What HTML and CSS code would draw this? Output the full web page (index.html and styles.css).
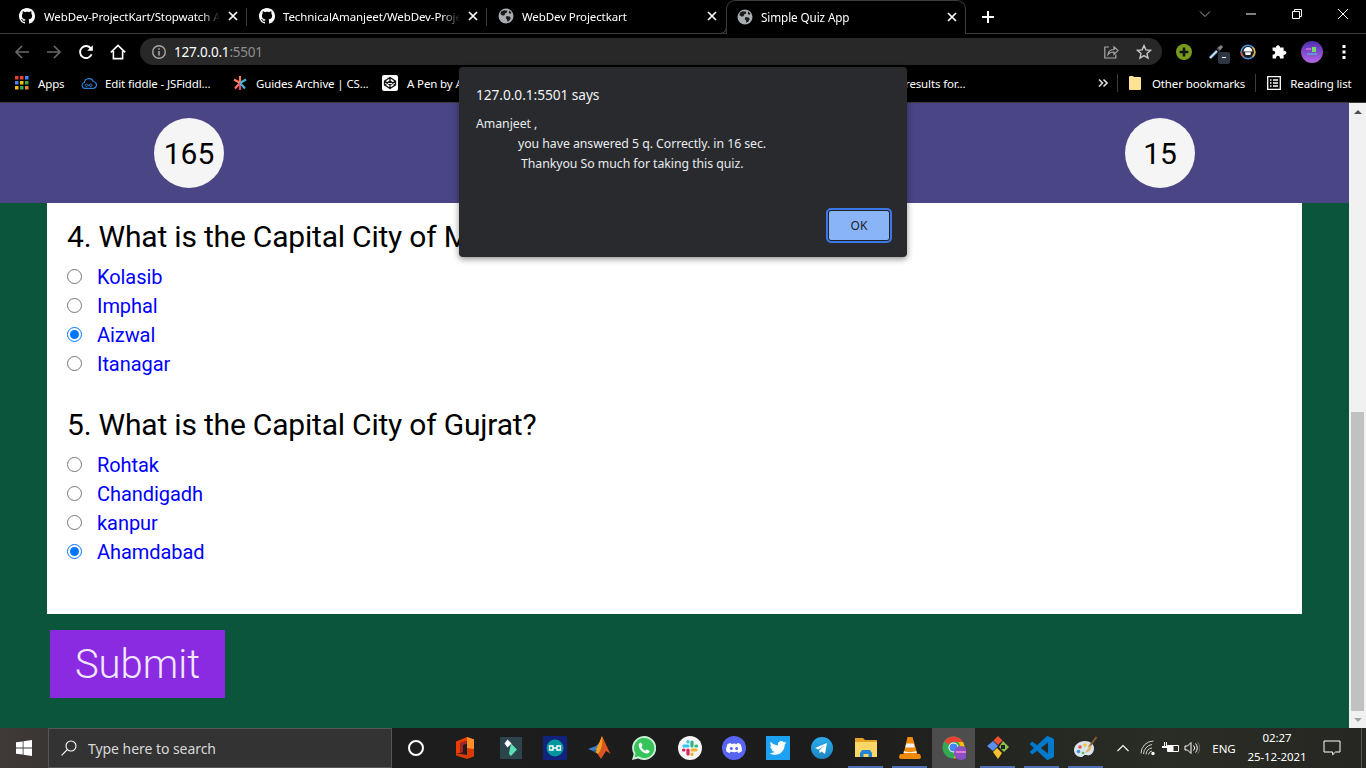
FILE: index.html
```html
<!DOCTYPE html>
<html lang="en">
<head>
<meta charset="utf-8">
<title>Simple Quiz App</title>
<link rel="stylesheet" href="styles.css">
</head>
<body>
<svg class="defs" aria-hidden="true">
  <symbol id="gh" viewBox="0 0 16 16"><path fill="#fff" d="M8 0C3.58 0 0 3.58 0 8c0 3.54 2.29 6.53 5.47 7.59.4.07.55-.17.55-.38 0-.19-.01-.82-.01-1.49-2.01.37-2.53-.49-2.69-.94-.09-.23-.48-.94-.82-1.13-.28-.15-.68-.52-.01-.53.63-.01 1.08.58 1.23.82.72 1.21 1.87.87 2.33.66.07-.52.28-.87.51-1.07-1.78-.2-3.64-.89-3.64-3.95 0-.87.31-1.59.82-2.15-.08-.2-.36-1.02.08-2.12 0 0 .67-.21 2.2.82.64-.18 1.32-.27 2-.27.68 0 1.36.09 2 .27 1.53-1.04 2.2-.82 2.2-.82.44 1.1.16 1.92.08 2.12.51.56.82 1.27.82 2.15 0 3.07-1.87 3.75-3.65 3.95.29.25.54.73.54 1.48 0 1.07-.01 1.93-.01 2.2 0 .21.15.46.55.38A8.013 8.013 0 0016 8c0-4.42-3.58-8-8-8z"/></symbol>
  <symbol id="globe" viewBox="0 0 16 16"><circle cx="8" cy="8" r="7.5" fill="#a9adb2"/><path fill="#1b1b1b" d="M3 3.6 6 2.2l3.4.5-.6 2-1.8.7-.2 1.7-2 .6L2.4 6zM8.6 8l3 .4 1.2 1.6-1.4 2.6-2 1.2-.4-2.4-1.4-1.4zM11 2.6l2.4 2-.6 1.2-2-.6z"/></symbol>
  <symbol id="x" viewBox="0 0 10 10"><path stroke="#fff" stroke-width="1.7" d="M1 1l8 8M9 1l-8 8"/></symbol>
</svg>

<header class="chrome">
  <div class="tabstrip">
    <div class="tab tab-first"><svg class="fav"><use href="#gh"/></svg><span class="tab-title">WebDev-ProjectKart/Stopwatch App</span><svg class="tab-x"><use href="#x"/></svg></div>
    <div class="tab"><svg class="fav"><use href="#gh"/></svg><span class="tab-title">TechnicalAmanjeet/WebDev-Projectkart</span><svg class="tab-x"><use href="#x"/></svg></div>
    <div class="tab tab-last"><svg class="fav"><use href="#globe"/></svg><span class="tab-title">WebDev Projectkart</span><svg class="tab-x"><use href="#x"/></svg></div>
    <div class="tab tab-active"><svg class="fav"><use href="#globe"/></svg><span class="tab-title">Simple Quiz App</span><svg class="tab-x"><use href="#x"/></svg></div>
    <svg class="newtab" viewBox="0 0 12 12"><path stroke="#fff" stroke-width="2" d="M6 0v12M0 6h12"/></svg>
    <div class="winctl">
      <svg class="wc" viewBox="0 0 12 12"><path fill="none" stroke="#aaa" d="M1 3.5l5 5 5-5"/></svg>
      <svg class="wc" viewBox="0 0 12 12"><path stroke="#fff" d="M1 6h10"/></svg>
      <svg class="wc" viewBox="0 0 12 12"><path fill="none" stroke="#fff" d="M1.5 3.5h7v7h-7zM3.5 3.5v-2h7v7h-2"/></svg>
      <svg class="wc" viewBox="0 0 12 12"><path stroke="#fff" d="M1 1l10 10M11 1L1 11"/></svg>
    </div>
  </div>
  <div class="toolbar">
    <svg class="tb dim" viewBox="0 0 16 16"><path fill="none" stroke="#6a6a6a" stroke-width="1.6" d="M15 8H2M8 2L2 8l6 6"/></svg>
    <svg class="tb dim" viewBox="0 0 16 16"><path fill="none" stroke="#6a6a6a" stroke-width="1.6" d="M1 8h13M8 2l6 6-6 6"/></svg>
    <svg class="tb" viewBox="0 0 16 16"><path fill="none" stroke="#fff" stroke-width="1.9" d="M13.6 10.4A6 6 0 1 1 13 4.6"/><path fill="#fff" d="M14.8 1.2v5.6H9.2z"/></svg>
    <svg class="tb" viewBox="0 0 16 16"><path fill="none" stroke="#fff" stroke-width="1.6" d="M.8 8.4L8 1.4l7.2 7M3.4 7v7.6h9.2V7"/></svg>
    <div class="omnibox">
      <svg class="info" viewBox="0 0 16 16"><circle cx="8" cy="8" r="6.3" fill="none" stroke="#a8a8a8" stroke-width="1.4"/><path stroke="#a8a8a8" stroke-width="1.6" d="M8 7v4.6M8 4.2v1.6"/></svg>
      <span class="url">127.0.0.1<span class="url-port">:5501</span></span>
      <svg class="omni-share" viewBox="0 0 16 16"><path fill="none" stroke="#a8a8a8" stroke-width="1.2" d="M6 3H1.8v11h11v-3.5M5 10.5c.4-3.4 3-5 6-5V2.8l4 3.8-4 3.8V8c-2.6 0-4.6.6-6 2.5z"/></svg>
      <svg class="omni-star" viewBox="0 0 16 16"><path fill="none" stroke="#c8c8c8" stroke-width="1.4" d="M8 1.6l1.9 4.3 4.6.4-3.5 3.1 1 4.6L8 11.6 4 14l1-4.6-3.5-3.1 4.6-.4z"/></svg>
    </div>
    <div class="exts">
      <svg class="ext" viewBox="0 0 16 16"><circle cx="8" cy="8" r="8" fill="#7a9a1e"/><path stroke="#10160a" stroke-width="2.6" d="M8 3.6v8.8M3.6 8h8.8"/></svg>
      <span class="ext-wrap">
        <svg class="ext" viewBox="0 0 16 16"><path stroke="#5b9bd5" stroke-width="3" d="M2 14l7-7"/><path stroke="#e8e8e8" stroke-width="1.2" d="M2 14l7-7"/><path stroke="#444" stroke-width="3.4" d="M9.5 3.5l3 3"/><path stroke="#888" stroke-width="3" d="M11 5l3-3"/></svg>
        <span class="ext-badge"><i></i></span>
      </span>
      <svg class="ext" viewBox="0 0 16 16"><circle cx="8" cy="8" r="6.8" fill="#1b1b1b" stroke="#4a90d9" stroke-width="1.6"/><path fill="none" stroke="#e8b23a" stroke-width="1.6" d="M12.8 3.2a6.8 6.8 0 0 1 0 9.6"/><path fill="none" stroke="#d9534f" stroke-width="1.6" d="M3.2 12.8a6.8 6.8 0 0 1-2-4.8"/><path fill="#fff" d="M3.6 7.4a4.4 4.4 0 0 1 8.8 0zM5 8.2h6L10.4 11H5.6z"/></svg>
      <svg class="ext" viewBox="0 0 16 16"><path fill="#fff" d="M6 1.2c1.4 0 2 1 2 2.2h3.6v3.4c1.3 0 2.8.4 2.8 2s-1.5 2-2.8 2v3.6H8c0-1.3-.5-2.6-2-2.6s-2 1.3-2 2.6H.6v-3.6c1.3 0 2.6-.7 2.6-2.2S1.900 6.800.600 6.800V3.400H4c0-1.200.6-2.200 2-2.200z"/></svg>
      <svg class="ext ext-avatar" viewBox="0 0 22 22"><defs><linearGradient id="av" x1="0" y1="0" x2="0" y2="1"><stop offset="0" stop-color="#4d2fb0"/><stop offset="1" stop-color="#b765e8"/></linearGradient></defs><circle cx="11" cy="11" r="11" fill="url(#av)"/><path fill="#6ee06a" d="M11 6h4v5h-4z"/><path stroke="#e070e0" stroke-width="1.5" d="M5 8h5"/><path stroke="#38d0d0" d="M6 13h10"/></svg>
      <svg class="ext ext-menu" viewBox="0 0 16 16"><path fill="#fff" d="M6.500 1h3v3h-3zM6.500 6.500h3v3h-3zM6.500 12h3v3h-3z"/></svg>
    </div>
  </div>
  <div class="bookmarks">
    <span class="bm bm-apps"><svg class="bm-ico" viewBox="0 0 14 14"><path fill="#ea4335" d="M0 0h3.500v3.500H0zM5 0h3.500v3.500H5z"/><path fill="#4285f4" d="M10 0h3.500v3.500H10zM0 5h3.500v3.500H0z"/><path fill="#fbbc05" d="M5 5h3.500v3.500H5zM0 10h3.500v3.500H0z"/><path fill="#34a853" d="M10 5h3.500v3.500H10zM5 10h3.500v3.500H5z"/><path fill="#ea8335" d="M10 10h3.500v3.500H10z"/></svg>Apps</span>
    <span class="bm bm-fiddle"><svg class="bm-ico" viewBox="0 0 16 14"><path fill="none" stroke="#2f7fd0" stroke-width="1.200" d="M4 12.400a3 3 0 0 1-.6-5.900 4.700 4.700 0 0 1 9-1 3.500 3.500 0 0 1 .2 6.900z"/><path fill="none" stroke="#2f7fd0" d="M5 8.500a1.200 1.200 0 1 0 0 1.600l2.600-1.600a1.200 1.200 0 1 1 0 1.600z" transform="translate(1.300 0)"/></svg>Edit fiddle - JSFiddl...</span>
    <span class="bm bm-guides"><svg class="bm-ico" viewBox="0 0 14 14"><path stroke="#ff7a59" stroke-width="2.200" d="M7 0v7M7 7L1 3.500M7 7l-5 5.500"/><path stroke="#e0457b" stroke-width="2.200" d="M7 7v7"/><path stroke="#47b5d6" stroke-width="2.200" d="M7 7l6-3.500M7 7l5 5.500"/></svg>Guides Archive | CS...</span>
    <span class="bm bm-pen"><svg class="bm-ico" viewBox="0 0 16 16"><rect width="16" height="16" rx="2" fill="#fff"/><path fill="none" stroke="#111" stroke-width="1.300" d="M8 2.500l5.500 3.600v3.800L8 13.500 2.500 9.900V6.100zM8 2.500v3.300M8 13.500v-3.300M2.500 6.100L8 9.900l5.500-3.800M2.500 9.900L8 6.100l5.500 3.800"/></svg>A Pen by Amanjeet</span>
    <span class="bm bm-results">results for...</span>
    <svg class="bm-more" viewBox="0 0 10 10"><path fill="none" stroke="#ddd" stroke-width="1.600" d="M1 1.500L4.500 5 1 8.500M5.500 1.500L9 5 5.500 8.500"/></svg>
    <i class="bm-sep"></i>
    <span class="bm bm-other"><svg class="bm-ico bm-folder" viewBox="0 0 12 14"><path fill="#fde293" d="M0 1A1 1 0 0 1 1 0h3l1 1h6a1 1 0 0 1 1 1v11a1 1 0 0 1-1 1H1a1 1 0 0 1-1-1z"/></svg>Other bookmarks</span>
    <i class="bm-sep bm-sep2"></i>
    <span class="bm"><svg class="bm-ico" viewBox="0 0 14 14"><path fill="none" stroke="#fff" stroke-width="1.300" d="M.7.7h12.600v12.600H.7z"/><path stroke="#fff" stroke-width="1.300" d="M3 4h1.500M6 4h5M3 7h1.500M6 7h5M3 10h1.500M6 10h5"/></svg>Reading list</span>
  </div>
</header>

<main class="viewport">
  <div class="page">
    <div class="quiz-head">
      <div class="circle">165</div>
      <div class="circle">15</div>
    </div>
    <form class="card">
      <section class="question">
        <h2 class="q-title">4. What is the Capital City of Mizoram?</h2>
        <label class="opt"><input type="radio" name="q4">Kolasib</label>
        <label class="opt"><input type="radio" name="q4">Imphal</label>
        <label class="opt"><input type="radio" name="q4" checked>Aizwal</label>
        <label class="opt"><input type="radio" name="q4">Itanagar</label>
      </section>
      <section class="question">
        <h2 class="q-title">5. What is the Capital City of Gujrat?</h2>
        <label class="opt"><input type="radio" name="q5">Rohtak</label>
        <label class="opt"><input type="radio" name="q5">Chandigadh</label>
        <label class="opt"><input type="radio" name="q5">kanpur</label>
        <label class="opt"><input type="radio" name="q5" checked>Ahamdabad</label>
      </section>
    </form>
    <button class="submit" type="button">Submit</button>
  </div>
  <div class="scrollbar">
    <div class="sb-btn"><i class="arr-up"></i></div>
    <div class="sb-thumb"></div>
    <div class="sb-btn"><i class="arr-down"></i></div>
  </div>
</main>

<footer class="taskbar">
  <div class="start"><svg class="win" viewBox="0 0 16 16"><path fill="#fff" d="M0 2.300l6.700-.9v6.200H0zM7.500 1.300L16 0v7.600H7.500zM0 8.400h6.700v6.200L0 13.700zM7.500 8.400H16V16l-8.500-1.200z"/></svg></div>
  <div class="search"><svg class="search-ico" viewBox="0 0 16 16"><circle cx="10" cy="6" r="5" fill="none" stroke="#fff" stroke-width="1.100"/><path stroke="#fff" stroke-width="1.200" d="M6.300 9.700L.6 15.400"/></svg>Type here to search</div>
  <div class="tk tk-cortana"><i class="cortana"></i></div>
  <div class="tk tk-office"><svg class="tki" viewBox="0 0 18 22"><path fill="#d83b01" d="M11 0l7 2.500v17L11 22l-11-3.500V16l11 2V0z"/><path fill="#eb3c00" d="M0 4.500L11 0v4L4.500 6v10L0 16z"/><path fill="#a4262c" d="M4.500 6L11 4v2.500L7 8v7.500l-2.500.5z"/><path fill="#ff8f2b" d="M11 0l7 2.500V12l-7-1z"/></svg></div>
  <div class="tk"><svg class="tki" viewBox="0 0 22 22"><rect width="22" height="22" fill="#2c454c"/><path fill="#59e0b5" d="M11 6.500l6 6L11 19l-2-2 1-6z"/><path fill="#fff" d="M7.500 2.500l4 4-4 4-3-4z"/></svg></div>
  <div class="tk"><svg class="tki tki-lg" viewBox="0 0 24 24"><rect width="24" height="24" fill="#11237c"/><circle cx="12" cy="12" r="8.500" fill="#00979d"/><path fill="none" stroke="#fff" stroke-width="1.400" d="M6.500 10h3.500v4H6.500zM14 10h3.500v4H14zM10 12h4"/></svg></div>
  <div class="tk tk-shift1"><svg class="tki tki-lg" viewBox="0 0 24 24"><path fill="#3f82c4" d="M0 13l8-3 3-3-2 7-4 1z"/><path fill="#d9541e" d="M14 0c2 3 6 14 9 18l-5-3-5 8c-2-3-3-5-5-7l4-9z"/><path fill="#f7a01d" d="M14 0c1 6 0 10-2 15l-2 3-3-2 4-9z"/><path fill="#2b5a92" d="M5 15l4-1-2 3z"/></svg></div>
  <div class="tk"><svg class="tki tki-lg" viewBox="0 0 24 24"><path fill="#c8f0d4" d="M12 0a12 12 0 0 0-10.300 18L0 24l6.200-1.600A12 12 0 1 0 12 0z"/><path fill="#35c35a" d="M12 2a10 10 0 0 0-8.400 15.300l-1 3.900 4-1A10 10 0 1 0 12 2z"/><path fill="#fff" d="M8.500 6.500c-.5 0-1.800 1-1.800 2.800 0 3.500 4.300 8.300 8.300 8.300 1.700 0 2.700-1.300 2.700-2.300 0-.5-2.500-1.800-3-1.800-.4 0-1 1.200-1.400 1.200-1 0-3.800-2.700-3.800-3.600 0-.4 1-1 1-1.500 0-.5-1.200-3.100-2-3.100z"/></svg></div>
  <div class="tk tk-shift2"><svg class="tki tki-lg" viewBox="0 0 24 24"><circle cx="12" cy="12" r="12" fill="#f5f5f5"/><g stroke-width="3.200" stroke-linecap="round"><path stroke="#36c5f0" d="M6 10h4M10 5.500v.5"/><path stroke="#2eb67d" d="M14 6v4M18.500 10H18"/><path stroke="#ecb22e" d="M14 14h4M14 18.500V18"/><path stroke="#e01e5a" d="M10 14v4M5.500 14H6"/></g></svg></div>
  <div class="tk"><svg class="tki tki-lg" viewBox="0 0 24 24"><circle cx="12" cy="12" r="12" fill="#5865f2"/><path fill="#fff" d="M8.600 7c-1.300.2-2.300.6-3 1.100-1 1.900-1.500 3.900-1.500 6.900 1 1.100 2.300 1.700 3.700 1.900l.8-1.300c2.200.7 4.600.7 6.800 0l.8 1.300c1.400-.2 2.700-.8 3.700-1.900 0-3-.5-5-1.500-6.900-.7-.5-1.700-.9-3-1.100l-.5.900a11 11 0 0 0-5.800 0z"/><circle cx="9.400" cy="12.400" r="1.500" fill="#5865f2"/><circle cx="14.600" cy="12.400" r="1.500" fill="#5865f2"/></svg></div>
  <div class="tk"><svg class="tki tki-lg" viewBox="0 0 24 24"><rect width="24" height="24" fill="#1da1f2"/><path fill="#fff" transform="translate(3.600 3.600) scale(.7)" d="M23.953 4.570a10 10 0 01-2.825.775 4.958 4.958 0 002.163-2.723c-.951.555-2.005.959-3.127 1.184a4.920 4.920 0 00-8.384 4.482C7.690 8.095 4.067 6.130 1.640 3.162a4.822 4.822 0 00-.666 2.475c0 1.710.870 3.213 2.188 4.096a4.904 4.904 0 01-2.228-.616v.060a4.923 4.923 0 003.946 4.827 4.996 4.996 0 01-2.212.085 4.936 4.936 0 004.604 3.417 9.867 9.867 0 01-6.102 2.105c-.390 0-.779-.023-1.170-.067a13.995 13.995 0 007.557 2.209c9.053 0 13.998-7.496 13.998-13.985 0-.210 0-.420-.015-.630A9.935 9.935 0 0024 4.590z"/></svg></div>
  <div class="tk"><svg class="tki tki-lg" viewBox="0 0 24 24"><defs><linearGradient id="tg" x1="0" y1="0" x2="0" y2="1"><stop offset="0" stop-color="#2aabee"/><stop offset="1" stop-color="#1c85c0"/></linearGradient></defs><circle cx="12" cy="12" r="11" fill="url(#tg)"/><path fill="#fff" d="M5 12l12-5-2 11-3.500-2.600-1.800 1.800-.4-3L15 9l-6.500 4.500z"/></svg></div>
  <div class="tk tk-open"><svg class="tki tki-lg" viewBox="0 0 24 24"><path fill="#e0a526" d="M1 2h8l2 2h12v4H1z"/><path fill="#fcd768" d="M1 6h22v15H1z"/><path fill="#1f86d4" d="M6 21v-4l2-3h8l2 3v4h-3.500v-3h-5v3z"/></svg></div>
  <div class="tk tk-open"><svg class="tki tki-lg" viewBox="0 0 24 24"><path fill="#ef8a0c" d="M9.500 1h5l5 17h-14z"/><path fill="#f4f4f4" d="M8.400 7.500h7.200l1.200 4H7.200z"/><path fill="#ef8a0c" d="M2 18h20l1 3c0 1-1 2-2 2H3c-1 0-2-1-2-2z"/><path fill="#f4f4f4" d="M6 15c3 1.500 9 1.500 12 0l.6 2H5.400z"/></svg></div>
  <div class="tk tk-active"><svg class="tki tki-lg" viewBox="0 0 24 24"><circle cx="11.500" cy="11.500" r="11" fill="#34a853"/><path fill="#ea4335" d="M11.500.500a11 11 0 0 1 9.500 5.500h-9.500a5.500 5.500 0 0 0-5 3L2.600 5A11 11 0 0 1 11.500.500z"/><path fill="#fbbc05" d="M21 6a11 11 0 0 1-9.500 16.500l4.500-8a5.500 5.500 0 0 0 0-8.500z"/><circle cx="11.500" cy="11.500" r="5" fill="#fff"/><circle cx="11.500" cy="11.500" r="4" fill="#4285f4"/><circle cx="19" cy="17" r="7" fill="#8c4fc4"/><path fill="#e27ad6" d="M14 15h10v2H14z"/></svg></div>
  <div class="tk tk-open"><svg class="tki tki-lg" viewBox="0 0 24 24"><path fill="#f05133" d="M12 0l4.500 4.500-4.500 4.500-4.500-4.500z" /><path fill="#5a8ff0" d="M7 5l5 5-5 5-6-5z"/><path fill="#8bc34a" d="M17 5l6 6-5 5-5-5z"/><path fill="#fbc02d" d="M7 16l4-4 5 5-4 6z"/><path fill="#222" d="M15 9h4v4h-4z"/></svg></div>
  <div class="tk tk-open"><svg class="tki tki-lg" viewBox="0 0 24 24"><path fill="#007acc" d="M23.150 2.587L18.210.21a1.494 1.494 0 0 0-1.705.29l-9.460 8.630-4.120-3.128a.999.999 0 0 0-1.276.057L.327 7.261A1 1 0 0 0 .326 8.740L3.899 12 .326 15.260a1 1 0 0 0 .001 1.479L1.650 17.940a.999.999 0 0 0 1.276.057l4.120-3.128 9.460 8.630a1.492 1.492 0 0 0 1.704.29l4.942-2.377A1.500 1.500 0 0 0 24 20.060V3.939a1.500 1.500 0 0 0-.850-1.352zm-5.146 14.861L10.826 12l7.178-5.448v10.896z"/></svg></div>
  <div class="tk tk-open"><svg class="tki tki-lg" viewBox="0 0 24 24"><path fill="#d9e4ec" d="M11 5C5 5 0 9 0 14c0 4 3 7 7 7 2.500 0 2.500-2 4-2 2 0 3 1 5 0 3-1.500 4-4 4-7 0-4-4-7-9-7z"/><circle cx="6" cy="11" r="1.800" fill="#e25b4a"/><circle cx="11" cy="9" r="1.800" fill="#f2c23a"/><circle cx="4.500" cy="15.500" r="1.800" fill="#4a90d9"/><circle cx="9" cy="17" r="1.300" fill="#5bb85b"/><path stroke="#8a5a2b" stroke-width="2" d="M22.500 1L15 11"/><path fill="#e0b45a" d="M16 9l-3 5-2 3 4.500-2 2-4z"/></svg></div>
  <div class="tray">
    <svg class="tray-i tray-chev" viewBox="0 0 14 14"><path fill="none" stroke="#fff" stroke-width="1.100" d="M1.500 10L7 4.500l5.500 5.500"/></svg>
    <svg class="tray-i tray-wifi" viewBox="0 0 16 16"><path fill="none" stroke="#ccc" d="M1 13.500A12.500 12.500 0 0 1 13.500 1M3.500 14A10 10 0 0 1 12 4.500M6 14.500A7 7 0 0 1 12 8M8.500 14.500A4 4 0 0 1 12 11"/><circle cx="13" cy="13.500" r="1.700" fill="#fff"/></svg>
    <svg class="tray-i tray-bat" viewBox="0 0 18 14"><path fill="none" stroke="#fff" d="M5.500 4.500h11v6h-11z"/><path fill="#fff" d="M5.500 4.500h6v6h-6zM0 5h6v2H0zM2 1h1v4H2zM4 1h1v4H4z"/></svg>
    <svg class="tray-i tray-vol" viewBox="0 0 16 14"><path fill="none" stroke="#fff" d="M1 5h2.500L7 1.500v11L3.500 9H1zM9.500 4.500a3.500 3.500 0 0 1 0 5M11.500 2.500a6.500 6.500 0 0 1 0 9"/><path fill="none" stroke="#666" d="M13.500 1a9 9 0 0 1 0 12"/></svg>
    <span class="tray-lang">ENG</span>
    <div class="clock"><span>02:27</span><span>25-12-2021</span></div>
    <svg class="tray-i tray-note" viewBox="0 0 18 16"><path fill="none" stroke="#fff" d="M1 1h16v11h-4.500l-2.800 2.800V12H1z"/></svg>
    <i class="desk"></i>
  </div>
</footer>

<div class="dialog" role="alertdialog">
  <h1 class="dlg-title">127.0.0.1:5501 says</h1>
  <p class="dlg-line">Amanjeet ,</p>
  <p class="dlg-line dlg-l2">you have answered 5 q. Correctly. in 16 sec.</p>
  <p class="dlg-line dlg-l3">Thankyou So much for taking this quiz.</p>
  <div class="dlg-actions"><button class="dlg-ok" type="button">OK</button></div>
</div>
</body>
</html>
```
FILE: styles.css
```css
* { box-sizing: border-box; }
html, body { margin: 0; height: 768px; overflow: hidden; }
body { position: relative; display: flex; flex-direction: column; width: 1366px; background: #000; font-family: "Noto Sans", "Open Sans", sans-serif; color: #fff; }
.defs { display: none; }
svg { display: block; flex: none; }

/* browser chrome */
.chrome { height: 103px; flex: none; background: #000; border-bottom: 1px solid #3a3a3a; }
.tabstrip { height: 34px; display: flex; align-items: stretch; padding-left: 7px; border-bottom: 1px solid #3c3c3c; }
.tab { position: relative; width: 240px; height: 33px; display: flex; align-items: center; padding: 0 9px 1px 12px; font-size: 11.5px; letter-spacing: -.1px; }
.tab::after { content: ""; position: absolute; right: 0; top: 8px; height: 18px; width: 1px; background: #3c3c3c; }
.tab-last { width: 239px; padding-left: 11px; }
.tab-last::after, .tab-active::after { display: none; }
.tab-active { height: 34px; border: 1px solid #3c3c3c; border-bottom: 0; border-radius: 9px 9px 0 0; background: #000; padding: 0 8px 2px 10px; font-size: 11.7px; }
.tab-active::before { content: ""; position: absolute; left: -8px; bottom: 0; width: 7px; height: 7px; border: 1px solid #3c3c3c; border-width: 0 1px 1px 0; border-radius: 0 0 7px 0; background: #000; }
.fav { width: 16px; height: 16px; margin-right: 8px; }
.tab-first .fav { margin-right: 9px; }
.tab-title { flex: 1; min-width: 0; overflow: hidden; white-space: nowrap; -webkit-mask-image: linear-gradient(to left, transparent 0, #000 18px); mask-image: linear-gradient(to left, transparent 0, #000 18px); }
.tab-x { width: 10px; height: 10px; margin-left: 8px; }
.newtab { width: 12px; height: 12px; margin: 11px 0 0 16px; }
.winctl { margin-left: auto; display: flex; padding: 8px 0 0; }
.wc { width: 12px; height: 12px; margin-right: 34px; margin-top: 0; }
.wc:last-child { margin-right: 17px; }

.toolbar { height: 34px; display: flex; align-items: center; padding: 1px 0 0 14px; }
.tb { width: 16px; height: 16px; margin-right: 16px; }
.omnibox { flex: none; width: 1022px; height: 27px; margin-left: -2px; border-radius: 14px; background: #282828; display: flex; align-items: center; padding: 0 10px 0 11px; font-size: 13.5px; }
.info { width: 16px; height: 16px; margin-right: 7px; }
.url { letter-spacing: -.2px; }
.url-port { color: #8d8d8d; }
.omni-share { width: 16px; height: 16px; margin-left: auto; margin-right: 17px; }
.omni-star { width: 16px; height: 16px; }
.exts { flex: none; display: flex; align-items: center; margin-left: 14px; }
.ext { width: 16px; height: 16px; margin-right: 16px; }
.ext-menu { margin-right: 0; }
.ext-wrap { position: relative; display: block; }
.ext-badge { position: absolute; right: 10px; top: 8px; width: 12px; height: 12px; border-radius: 2px; background: #2d3540; display: flex; align-items: center; justify-content: center; }
.ext-badge i { width: 4px; height: 1px; background: #fff; }
.ext-avatar { width: 22px; height: 22px; margin: 0 13px 0 -3px; }

.bookmarks { height: 34px; display: flex; align-items: center; font-size: 11.5px; letter-spacing: -.13px; padding: 0 0 4px 15px; white-space: nowrap; }
.bm { display: flex; align-items: center; }
.bm-ico { width: 14px; height: 14px; margin-right: 9px; }
.bm-apps { width: 66px; }
.bm-fiddle { width: 152px; }
.bm-fiddle .bm-ico { width: 16px; margin-right: 8px; }
.bm-guides { width: 151px; }
.bm-guides .bm-ico { margin-right: 9px; }
.bm-pen { width: 130px; margin-left: -2px; }
.bm-pen .bm-ico { width: 16px; height: 16px; margin-right: 9px; }
.bm-results { margin-left: 393px; width: 193px; }
.bm-more { width: 10px; height: 10px; }
.bm-sep { width: 1px; height: 18px; background: #3c3c3c; margin-left: 9px; margin-right: 11px; }
.bm-other .bm-folder { width: 12px; margin-right: 11px; }
.bm-sep2 { margin-left: 10px; margin-right: 11px; }

/* page */
.viewport { flex: none; height: 625px; display: flex; }
.page { flex: 1; background: #0b553c; }
.quiz-head { height: 100px; background: #4a4685; display: flex; justify-content: space-between; align-items: center; padding: 0 154px; }
.circle { width: 70px; height: 70px; border-radius: 50%; background: #f5f5f5; color: #000; display: flex; align-items: center; justify-content: center; font: 400 30px Roboto, sans-serif; padding-top: 1px; }
.card { width: 1255px; margin-left: 47px; height: 411px; background: #fff; padding: 15px 20px 0; font-family: Roboto, sans-serif; }
.question + .question { margin-top: 28px; }
.q-title { margin: 0 0 6px; font: 400 30px/38px Roboto, sans-serif; color: #000; letter-spacing: -.2px; }
.opt { display: flex; align-items: center; height: 29px; color: #00f; font-size: 20px; letter-spacing: -.06px; }
.opt input { width: 15px; height: 15px; margin: 0 15px 0 0; }
.submit { display: block; margin: 16px 0 0 50px; width: 175px; height: 68px; border: 0; background: #8a2be2; color: #f2e8fd; font: 300 40px Roboto, sans-serif; padding: 0; }

.scrollbar { width: 17px; background: #f1f1f1; display: flex; flex-direction: column; }
.sb-btn { height: 17px; display: flex; align-items: center; justify-content: center; }
.arr-up { width: 0; height: 0; border: 4px solid transparent; border-top: 0; border-bottom: 4px solid #505050; }
.arr-down { width: 0; height: 0; border: 4px solid transparent; border-bottom: 0; border-top: 4px solid #a3a3a3; }
.sb-thumb { margin: auto 2px 0; height: 299px; background: #c1c1c1; }

/* taskbar */
.taskbar { height: 40px; flex: none; display: flex; align-items: stretch; background: linear-gradient(to right, #1e1e1e 0, #1c1c1c 60%, #2a2d25 85%, #262622 100%); }
.start { width: 48px; background: linear-gradient(to right, #3f3a37, #3a3634); display: flex; align-items: center; justify-content: center; }
.win { width: 16px; height: 16px; }
.search { width: 344px; background: #333; border: 1px solid #565656; display: flex; align-items: center; font-size: 14px; color: #d8d8d8; padding-left: 12px; letter-spacing: -.05px; }
.search-ico { width: 16px; height: 16px; margin-right: 11px; }
.tk { position: relative; width: 44px; display: flex; align-items: center; justify-content: center; }
.tk-cortana { width: 48px; }
.cortana { width: 16px; height: 16px; border: 2.500px solid #fff; border-radius: 50%; }
.tk-office { width: 49px; }
.tk-shift1 { margin-left: 1px; }
.tk-shift2 { margin-left: 2px; }
.tki { width: 22px; height: 22px; }
.tki-lg { width: 24px; height: 24px; }
.tk-open::after { content: ""; position: absolute; left: 4px; right: 5px; bottom: 0; height: 2px; background: #4f6fb5; }
.tk-active { background: #4d4d4d; width: 43px; margin-right: 1px; }
.tray { display: flex; align-items: center; margin-left: 4px; flex: 1; }
.tray-i { margin: 0 auto; }
.tray-chev { width: 14px; height: 14px; margin: 0 6px 0 4px; }
.tray-wifi { width: 16px; height: 16px; margin: 0 4px; }
.tray-bat { width: 18px; height: 14px; margin: 0 2px; }
.tray-vol { width: 16px; height: 14px; margin: 0 2px; }
.tray-lang { width: 44px; text-align: center; font-size: 11.500px; }
.clock { width: 62px; display: flex; flex-direction: column; align-items: center; font-size: 11.500px; line-height: 19px; letter-spacing: -.1px; padding-bottom: 3px; }
.tray-note { width: 18px; height: 16px; margin: 0 15px; }
.desk { width: 1px; height: 40px; background: #55554f; margin-left: 5px; }

/* alert dialog */
.dialog { position: absolute; left: 459px; top: 67px; width: 448px; height: 190px; background: #292a2d; border-radius: 4px; box-shadow: 0 2px 6px rgba(0, 0, 0, .45); padding: 17px 16px 0 17px; color: #e8eaed; }
.dlg-title { margin: 0 0 8px; font-size: 13.700px; font-weight: 400; line-height: 22px; color: #f1f3f4; letter-spacing: -.05px; }
.dlg-line { margin: 0; font-size: 12.300px; line-height: 20px; height: 20px; letter-spacing: -.05px; }
.dlg-l2 { padding-left: 42px; }
.dlg-l3 { padding-left: 45px; }
.dlg-actions { position: absolute; right: 17px; bottom: 16px; }
.dlg-ok { display: block; width: 62px; height: 31px; background: #8ab4f8; color: #202124; border: 1px solid #202124; outline: 2px solid #3b78e7; outline-offset: 0; border-radius: 3px; font: 400 12px "Noto Sans", sans-serif; padding: 0; }
```
